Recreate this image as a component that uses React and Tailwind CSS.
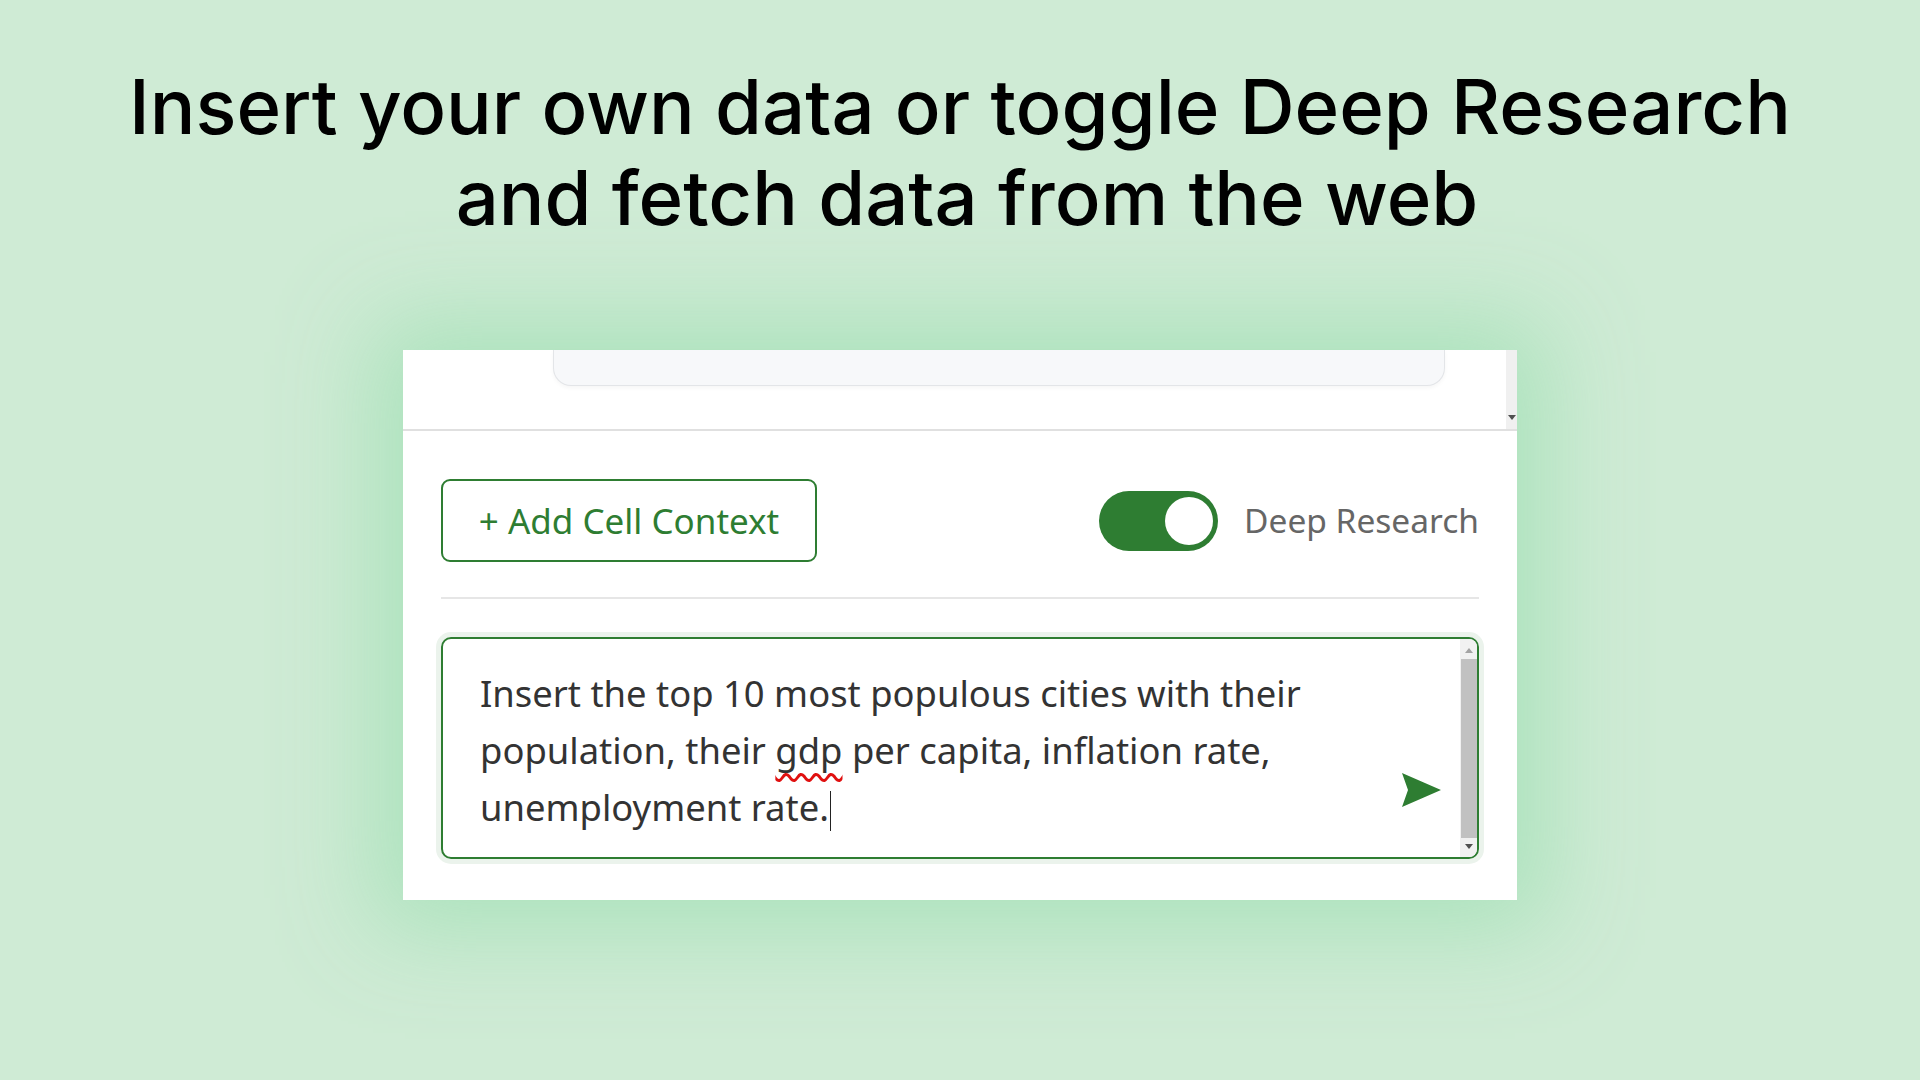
import React from 'react';

const Tri = ({ dir = 'down', color = '#505050' }) => (
    <svg width="8" height="5" viewBox="0 0 8 5">
        <path d={dir === 'down' ? 'M0 0 L8 0 L4 5 Z' : 'M0 5 L8 5 L4 0 Z'} fill={color} />
    </svg>
);

const SendIcon = () => (
    <svg width="40" height="34" viewBox="0 0 40 34">
        <path d="M1 0 L40 17 L1 34 L7 17 Z" fill="#2e7d32" />
    </svg>
);

const Toggle = () => (
    <div className="w-[119px] h-[60px] rounded-full bg-[#2e7d32] flex items-center justify-end pr-[5px]">
        <div className="w-[48px] h-[48px] rounded-full bg-white" />
    </div>
);

const App = () => {
    return (
        <div className="min-h-screen w-full bg-[#cfebd5] flex flex-col items-center font-['Inter',sans-serif]">
            <h1 className="mt-[61px] text-[76px] leading-[91px] text-black text-center font-medium">
                Insert your own data or toggle Deep Research
                <br />
                <span className="pl-[14px]">and fetch data from the web</span>
            </h1>

            {/* chat panel */}
            <div className="mt-[107px] w-[1114px] h-[550px] bg-white flex flex-col shadow-[0_0_90px_30px_rgba(165,224,183,0.85)] font-['Noto_Sans','Open_Sans',sans-serif]">
                <div className="h-[79px] flex">
                    <div className="flex-1">
                        <div className="ml-[150px] w-[892px] h-[36px] bg-[#f7f8fa] border border-t-0 border-[#e3e5e8] rounded-b-[18px] shadow-[0_2px_4px_rgba(0,0,0,0.04)]" />
                    </div>
                    <div className="w-[11px] bg-[#f0f0f0] flex flex-col justify-end items-center pb-[9px]">
                        <Tri dir="down" />
                    </div>
                </div>
                <div className="h-[2px] bg-[#e0e0e0]" />

                <div className="px-[38px] pt-[48px]">
                    <div className="flex items-center justify-between">
                        <button className="w-[376px] h-[83px] border-2 border-[#2e7d32] rounded-[9px] text-[#2e7d32] text-[35px] leading-none">
                            + Add Cell Context
                        </button>
                        <div className="flex items-center gap-[26px]">
                            <Toggle />
                            <span className="text-[#666666] text-[33.5px] leading-none">Deep Research</span>
                        </div>
                    </div>

                    <div className="mt-[35px] h-[2px] bg-[#e6e6e6]" />

                    <div className="mt-[38px] h-[222px] border-2 border-[#2e7d32] rounded-[10px] shadow-[0_0_0_5px_#ebf3ec] flex overflow-hidden">
                        <div className="flex-1 pl-[37px] pt-[26px] text-[#333333] text-[36.4px] leading-[57px]">
                            Insert the top 10 most populous cities with their
                            <br />
                            population, their{' '}
                            <span className="underline decoration-wavy decoration-[#e01010] decoration-[2.5px] underline-offset-[9px] [text-decoration-skip-ink:none]">gdp</span>{' '}
                            per capita, inflation rate,
                            <br />
                            unemployment rate.
                            <span className="inline-block w-[1.5px] h-[40px] bg-[#222] align-middle ml-[1px]" />
                        </div>
                        <div className="flex flex-col justify-end pb-[50px] pr-[19px]">
                            <SendIcon />
                        </div>
                        <div className="w-[17px] bg-[#f1f1f1] flex flex-col items-center pt-[9px] pb-[8px]">
                            <Tri dir="up" color="#a3a3a3" />
                            <div className="mt-[6px] mb-[6px] flex-1 w-[16px] bg-[#c1c1c1]" />
                            <Tri dir="down" />
                        </div>
                    </div>
                </div>
            </div>
        </div>
    );
};

export default App;
